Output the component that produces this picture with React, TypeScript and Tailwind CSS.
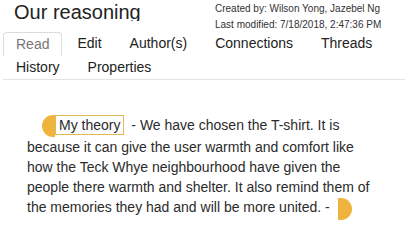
import { useState } from "react";

const tabs = ["Read", "Edit", "Author(s)", "Connections", "Threads", "History", "Properties"];

const Header = () => {
  return (
    <div className="flex h-[32px]">
      <div className="h-[21px] w-[215px] shrink-0 overflow-hidden pl-[14px] pt-[1px]">
        <h1 className="text-[20px] leading-[22px] text-[#222]">Our reasoning</h1>
      </div>
      <div className="pt-[1px] text-[10px] leading-[16px] text-[#333]">
        <div>Created by: Wilson Yong, Jazebel Ng</div>
        <div>Last modified: 7/18/2018, 2:47:36 PM</div>
      </div>
    </div>
  );
};

const Tabs = () => {
  const [active, setActive] = useState("Read");
  return (
    <div className="mx-[3px] flex flex-wrap border-b border-[#e3e3e3]">
      {tabs.map((t) =>
        t === active ? (
          <button
            key={t}
            className="mr-[2px] h-[23.5px] rounded-t-[4px] border border-b-0 border-[#dcdcdc] px-[12px] text-[14px] leading-[22px] text-[#777]"
          >
            {t}
          </button>
        ) : (
          <button
            key={t}
            onClick={() => setActive(t)}
            className="mr-[2px] h-[23.5px] px-[13px] text-[14px] leading-[23.5px] text-[#222]"
          >
            {t}
          </button>
        ),
      )}
    </div>
  );
};

export default function App() {
  return (
    <div className="h-[245px] w-[408px] overflow-hidden bg-white font-['Liberation_Sans',Arial,sans-serif]">
      <Header />
      <Tabs />
      {/* reasoning body */}
      <p className="mt-[35px] px-[27px] text-[14px] leading-[20px] text-[#2b2b2b]">
        <span className="ml-[15px] inline-block h-[22px] w-[13px] rounded-l-full bg-[#efb33f] align-middle"></span>
        <span className="mr-[3px] inline-block border border-[#e2b950] px-[3px] leading-[18px]">My theory</span>
        {" - We have chosen the T-shirt. It is because it can give the user warmth and comfort like how the Teck Whye neighbourhood have given the people there warmth and shelter. It also remind them of the memories they had and will be more united. - "}
        <span className="ml-[4px] inline-block h-[22px] w-[14px] rounded-r-full bg-[#efb33f] align-middle"></span>
      </p>
    </div>
  );
}
